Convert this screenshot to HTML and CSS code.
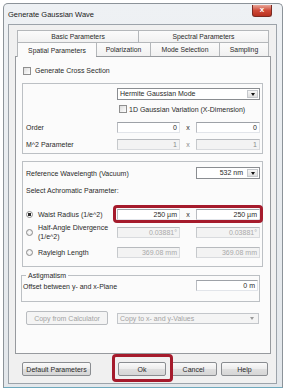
FILE: index.html
```html
<!DOCTYPE html>
<html>
<head>
<meta charset="utf-8">
<link rel="stylesheet" href="styles.css">
</head>
<body>
<div class="window">
  <div class="titlebar">
    <span class="title">Generate Gaussian Wave</span>
    <span class="close">x</span>
  </div>
  <div class="client">
    <div class="tabrow back">
      <div class="tab w-basic">Basic Parameters</div>
      <div class="tab w-spectral last">Spectral Parameters</div>
    </div>
    <div class="tabrow front">
      <div class="tab sel w-spatial">Spatial Parameters</div>
      <div class="tab w-pol">Polarization</div>
      <div class="tab w-mode">Mode Selection</div>
      <div class="tab w-samp last">Sampling</div>
    </div>
    <div class="panel">
      <div class="check-row top-check"><span class="checkbox"></span><span class="gap6"></span>Generate Cross Section</div>

      <div class="group g1">
        <div class="grid r-mode">
          <div></div>
          <div class="combo span3"><span class="combo-text">Hermite Gaussian Mode</span><span class="arrow"><span class="tri"></span></span></div>
        </div>
        <div class="grid r-1d">
          <div></div>
          <div class="check-row span3"><span class="checkbox cb-1d"></span><span class="gap2"></span>1D Gaussian Variation (X-Dimension)</div>
        </div>
        <div class="grid r-order">
          <div class="lbl">Order</div>
          <div class="field">0</div>
          <div class="xsep">x</div>
          <div class="field">0</div>
        </div>
        <div class="grid r-m2">
          <div class="lbl">M^2 Parameter</div>
          <div class="field dis">1</div>
          <div class="xsep disx">x</div>
          <div class="field dis">1</div>
        </div>
      </div>

      <div class="group g2">
        <div class="grid r-wave">
          <div class="lbl span3">Reference Wavelength (Vacuum)</div>
          <div class="combo"><span class="combo-text right">532 nm</span><span class="arrow"><span class="tri"></span></span></div>
        </div>
        <div class="r-select">Select Achromatic Parameter:</div>
        <div class="grid r-waist">
          <div class="radio-lbl"><span class="radio on"></span>Waist Radius (1/e^2)</div>
          <div class="field">250 µm</div>
          <div class="xsep">x</div>
          <div class="field">250 µm</div>
        </div>
        <div class="grid r-half">
          <div class="radio-lbl"><span class="radio"></span><span>Half-Angle Divergence<br>(1/e^2)</span></div>
          <div class="field dis light">0.03881°</div>
          <div></div>
          <div class="field dis light">0.03881°</div>
        </div>
        <div class="grid r-ray">
          <div class="radio-lbl"><span class="radio"></span>Rayleigh Length</div>
          <div class="field dis light">369.08 mm</div>
          <div></div>
          <div class="field dis light">369.08 mm</div>
        </div>
      </div>

      <fieldset class="astig">
        <legend>Astigmatism</legend>
        <div class="offset-row">
          <span class="offset-lbl">Offset between y- and x-Plane</span>
          <div class="field f-offset">0 m</div>
        </div>
      </fieldset>

      <div class="copy-row">
        <div class="btn btn-dis b-copy">Copy from Calculator</div>
        <div class="combo combo-dis c-copy"><span class="combo-text">Copy to x- and y-Values</span><span class="arrow"><span class="tri"></span></span></div>
      </div>
    </div>

    <div class="buttons">
      <div class="btn b-default">Default Parameters</div>
      <div class="btn b-ok">Ok</div>
      <div class="btn b-cancel">Cancel</div>
      <div class="btn b-help">Help</div>
    </div>
  </div>
</div>
<div class="hl hl-waist"></div>
<div class="hl hl-ok"></div>
</body>
</html>
```

FILE: styles.css
```css
* { box-sizing: border-box; }
html, body { margin: 0; padding: 0; }
body {
  width: 285px; height: 391px; overflow: hidden; background: #fff; position: relative;
  font-family: "Liberation Sans", Arial, sans-serif; font-size: 7px; line-height: 9px; color: #2a2a2a;
}
.window {
  margin: 3px 0 0 3px; width: 280px; height: 385px;
  border: 1px solid #8c9399; border-bottom-color: #6fa9bd; border-radius: 5px 5px 0 0;
  background: linear-gradient(#eef1f4, #e3e7eb);
  padding: 0 5px 3px 4px; display: flex; flex-direction: column;
}
.titlebar { height: 20px; display: flex; align-items: flex-start; flex: none; }
.title { font-size: 7.5px; line-height: 9px; margin-top: 6px; color: #1a1a1a; }
.close {
  margin-left: auto; margin-right: 5px; margin-top: 1px; width: 20px; height: 12px;
  border: 1px solid #7a2a22; border-top: none; border-radius: 0 0 3px 3px;
  background: linear-gradient(#e9a597, #cf4a38 50%, #b8301f);
  color: #fff; font-weight: bold; font-size: 8px; line-height: 10px; text-align: center;
}
.client {
  flex: 1; border: 1px solid #9ca3aa; background: #f0f0f0;
  padding: 5px 5px 0 6px; display: flex; flex-direction: column;
}
.tabrow { display: flex; margin: 0 2px; flex: none; }
.back { height: 12px; }
.front { height: 14px; }
.tab {
  border: 1px solid #b4b7ba; border-bottom: none; border-right: none;
  background: linear-gradient(#fbfbfb, #f1f1f1);
  display: flex; align-items: center; justify-content: center; font-size: 6.8px;
}
.tab.last { border-right: 1px solid #b4b7ba; }
.tab.sel { background: #fbfbfb; position: relative; z-index: 1; margin-bottom: -1px; height: 15px; }
.w-basic { width: 121px; }
.w-spectral { width: 131px; }
.w-spatial { width: 79px; }
.w-pol { width: 54px; }
.w-mode { width: 69px; }
.w-samp { width: 50px; }

.panel {
  height: 298px; flex: none; border: 1px solid #979a9e; background: #fbfbfb;
  padding: 9px 7px 0 6px;
}
.check-row { display: flex; align-items: center; height: 9px; }
.top-check { margin-left: 1px; }
.checkbox {
  width: 8px; height: 8px; border: 1px solid #8f8f8f; flex: none;
  background: linear-gradient(135deg, #dcdcdc, #ffffff);
}
.gap6 { width: 4px; flex: none; }
.gap2 { width: 2px; flex: none; }
.cb-1d { margin-left: 2px; }

.group { border: 1px solid #bcc0c4; }
.g1 { margin-top: 8px; padding: 4px 2px 3px 3px; }
.g2 { margin-top: 7px; padding: 5px 2px 8px 3px; }
.grid { display: grid; grid-template-columns: 91px 63px 16px 64px; align-items: center; }
.span3 { grid-column: span 3; }
.r-mode { height: 12px; }
.r-1d { margin-top: 4px; height: 10px; }
.r-order { margin-top: 8px; height: 11px; }
.r-m2 { margin-top: 6px; height: 11px; }
.r-wave { height: 12px; }
.r-select { margin-top: 6px; height: 11px; line-height: 11px; }
.r-waist { margin-top: 13px; height: 11px; }
.r-half { margin-top: 3px; height: 18px; }
.r-ray { margin-top: 6px; height: 11px; }

.field {
  height: 11px; background: #fff; text-align: right; padding-right: 2px; line-height: 9px;
  border: 1px solid #e2e5ea; border-top-color: #9ea2a8; border-left-color: #b9bcc1; white-space: nowrap;
}
.field.dis { background: #f3f3f3; color: #8a8a8a; border-color: #d9dbde; border-top-color: #b7babe; border-left-color: #c6c9cc; }
.field.light { color: #a9a9a9; }
.xsep { text-align: center; }
.disx { color: #8a8a8a; }

.combo {
  height: 12px; display: flex; background: #fff;
  border: 1px solid #8a8d91;
}
.combo-text { flex: 1; padding-left: 2px; line-height: 10px; white-space: nowrap; overflow: hidden; }
.combo-text.right { text-align: right; padding-right: 3px; }
.arrow {
  width: 11px; flex: none; margin: 1px; border: 1px solid #c5c8cc;
  background: linear-gradient(#f7f7f7, #dedede);
  display: flex; align-items: center; justify-content: center;
}
.tri { width: 0; height: 0; border-left: 2.5px solid transparent; border-right: 2.5px solid transparent; border-top: 3px solid #111; }
.combo-dis { border-color: #c3c6ca; background: #f4f4f4; color: #a3a3a3; }
.combo-dis .arrow { border-color: transparent; background: transparent; }
.combo-dis .tri { border-top-color: #9a9a9a; }

.radio-lbl { display: flex; align-items: center; }
.radio {
  width: 7px; height: 7px; border-radius: 50%; border: 1px solid #8c8c8c; flex: none; margin-right: 5px;
  background: radial-gradient(#ffffff, #e0e0e0);
}
.radio.on { background: radial-gradient(#2a2a2a 0 1.6px, #ffffff 2px); }

.astig {
  margin: 4px 3px 0 -1px; padding: 0 1px 10px 1px; border: 1px solid #bcc0c4; min-width: 0;
}
.astig legend { padding: 0 2px; margin-left: 3px; line-height: 9px; height: 9px; }
.offset-row { display: flex; align-items: flex-end; justify-content: space-between; height: 11px; }
.f-offset { width: 62px; }

.copy-row { display: flex; margin-top: 9px; padding-left: 4px; align-items: flex-start; }
.btn {
  height: 14px; display: flex; align-items: center; justify-content: center;
  border: 1px solid #8a8d91; border-radius: 2px;
  background: linear-gradient(#fafafa, #ececec 50%, #dfdfdf 51%, #d6d6d6);
  white-space: nowrap;
}
.btn-dis { border-color: #b9bcc0; background: #f4f4f4; color: #a3a3a3; }
.b-copy { width: 82px; }
.c-copy { width: 142px; margin-left: 9px; margin-top: 2px; height: 11px; }

.buttons { display: flex; margin-top: 8px; margin-left: 7px; }
.b-default { width: 69px; }
.b-ok { width: 48px; margin-left: 27px; }
.b-cancel { width: 47px; margin-left: 4px; }
.b-help { width: 47px; margin-left: 4px; }

.hl { position: absolute; border: 3px solid #a51b2c; border-radius: 4px; }
.hl-waist { left: 113px; top: 205px; width: 150px; height: 18px; }
.hl-ok { left: 112px; top: 354px; width: 61px; height: 28px; }
```
